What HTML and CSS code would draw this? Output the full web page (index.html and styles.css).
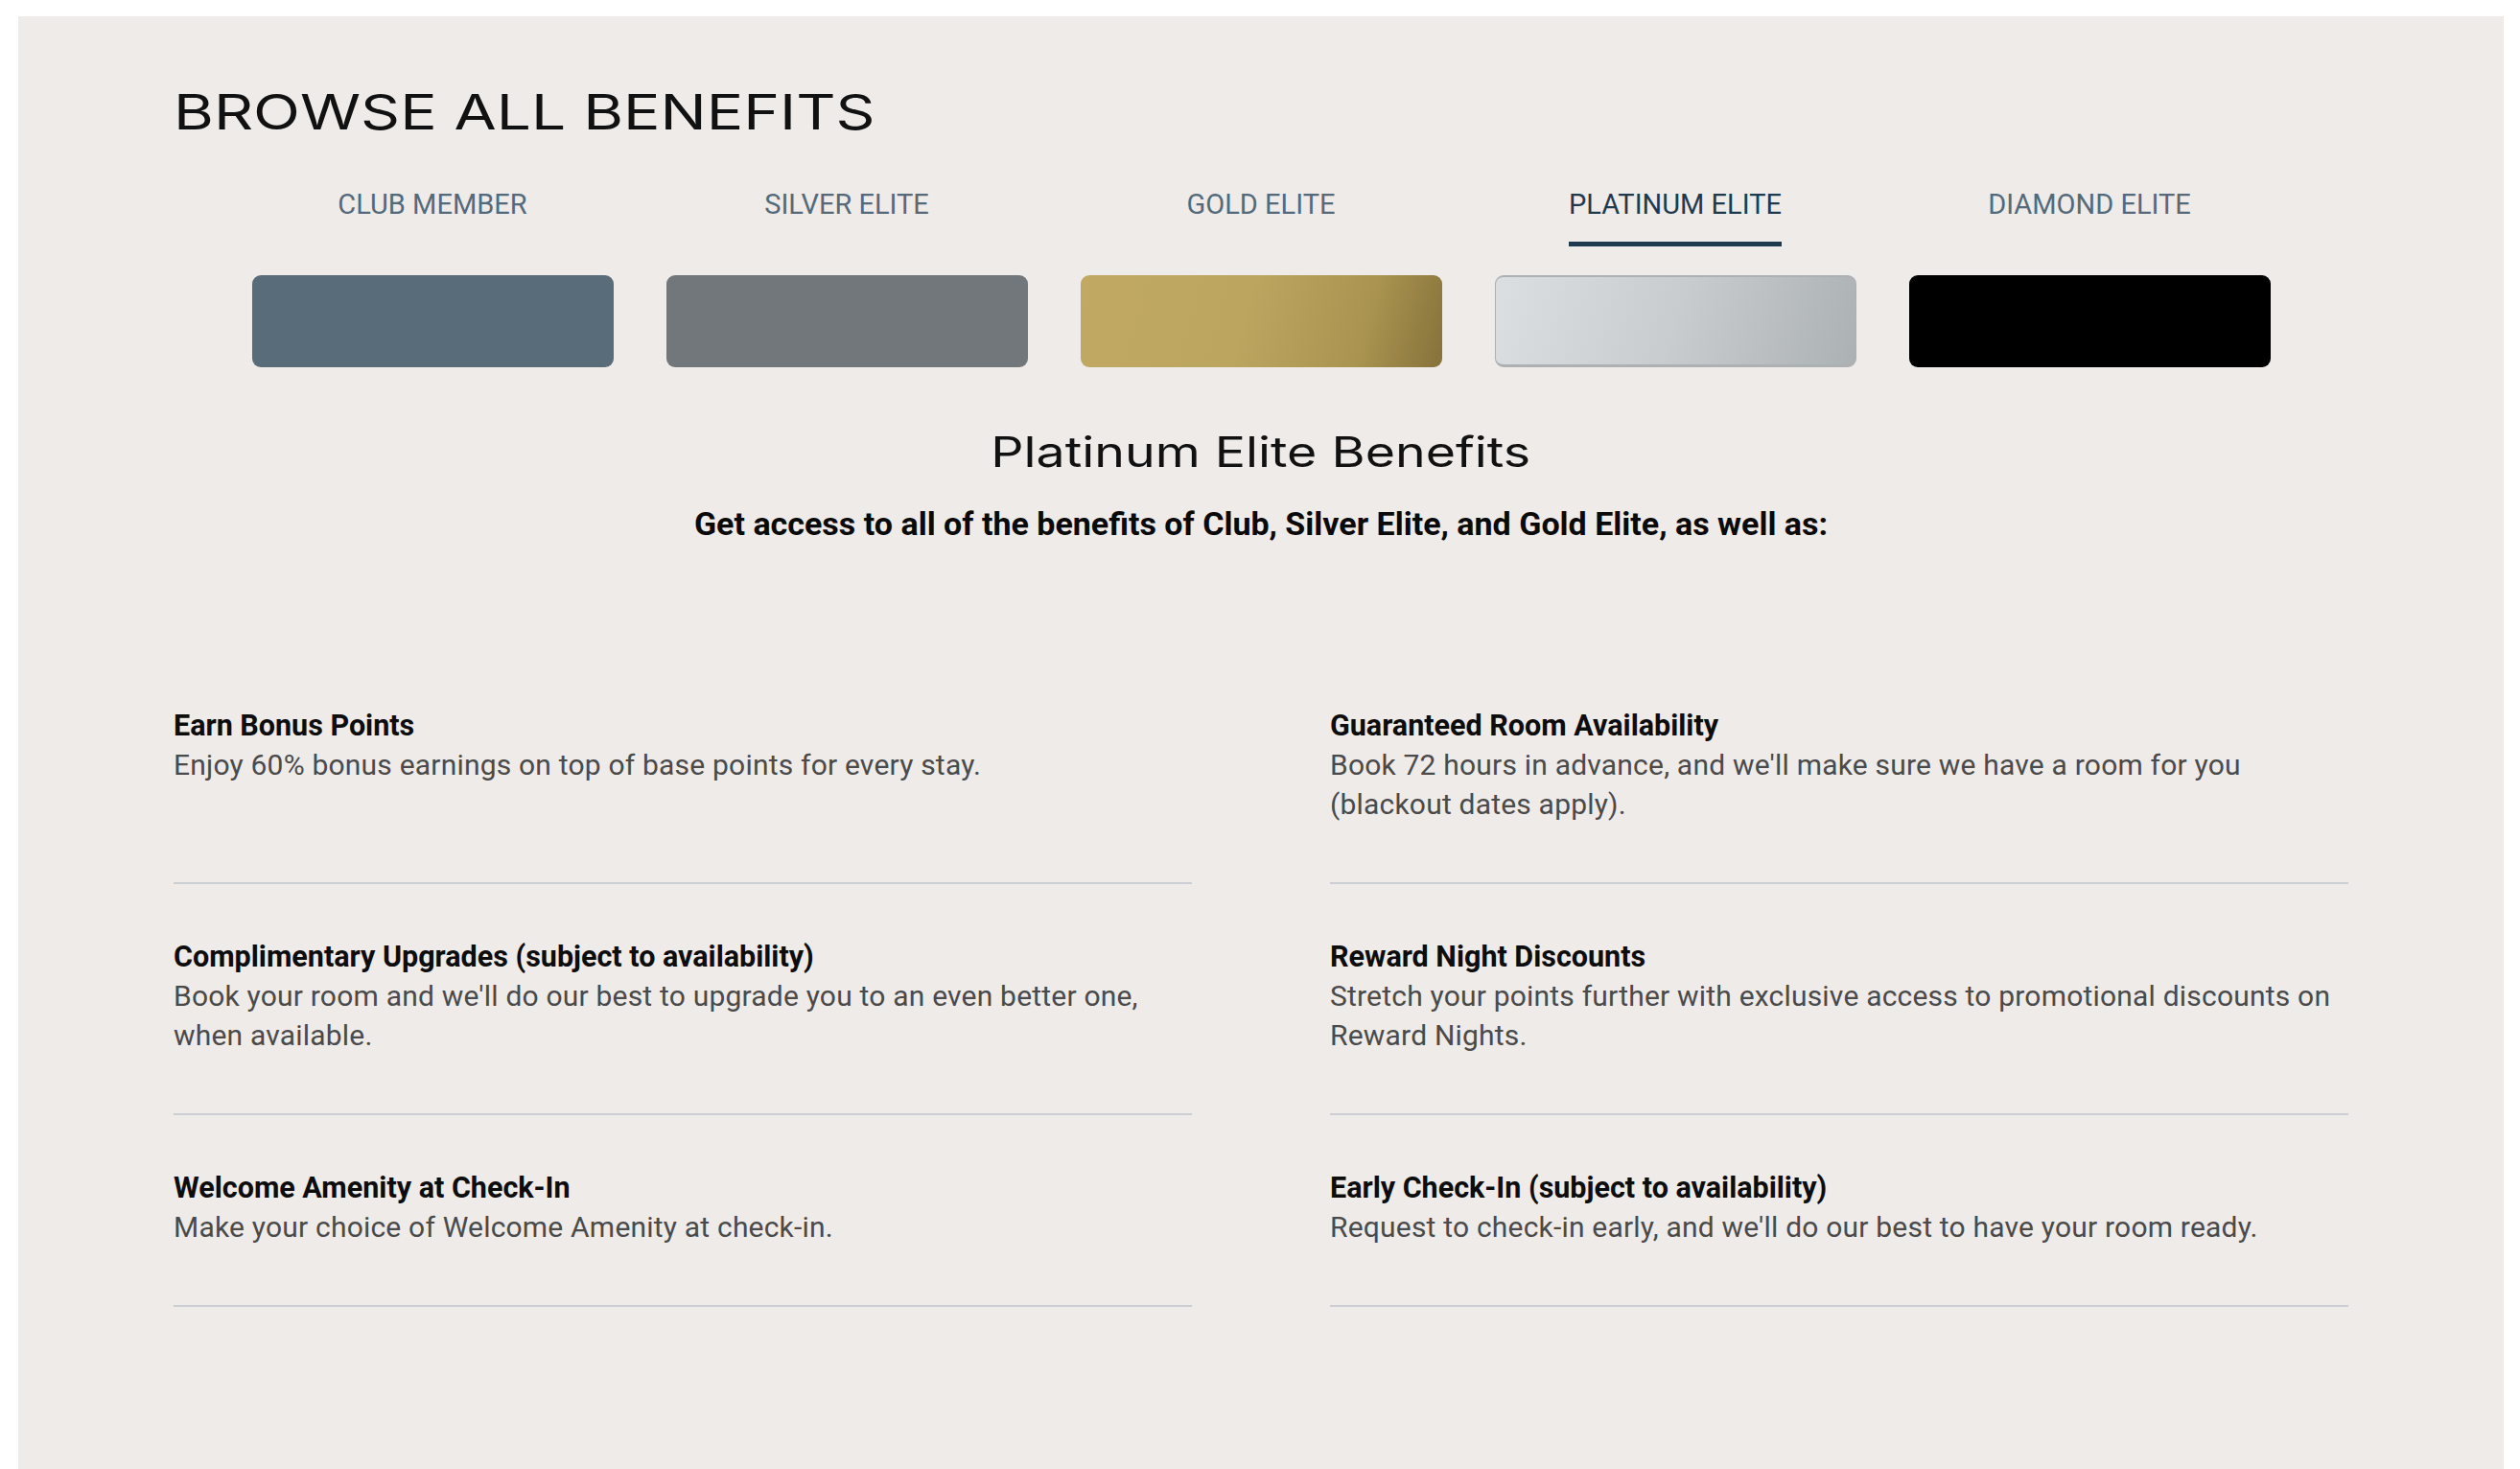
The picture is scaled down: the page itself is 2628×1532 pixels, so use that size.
FILE: index.html
```html
<!DOCTYPE html>
<html lang="en">
  <head>
    <meta charset="UTF-8" />
    <meta name="viewport" content="width=device-width, initial-scale=1.0" />
    <title>Browse all benefits</title>
    <link rel="stylesheet" href="styles.css">
  </head>
  <body>
    <main class="panel">
      <h1 class="titulo"><span class="ancho">BROWSE ALL BENEFITS</span></h1>

      <nav class="niveles">
        <div class="nivel">
          <span class="pestana">CLUB MEMBER</span>
          <div class="tarjeta club"></div>
        </div>
        <div class="nivel">
          <span class="pestana">SILVER ELITE</span>
          <div class="tarjeta silver"></div>
        </div>
        <div class="nivel">
          <span class="pestana">GOLD ELITE</span>
          <div class="tarjeta gold"></div>
        </div>
        <div class="nivel">
          <span class="pestana activa">PLATINUM ELITE</span>
          <div class="tarjeta platinum"></div>
        </div>
        <div class="nivel">
          <span class="pestana">DIAMOND ELITE</span>
          <div class="tarjeta diamond"></div>
        </div>
      </nav>

      <h2 class="subtitulo"><span class="ancho">Platinum Elite Benefits</span></h2>
      <p class="intro">Get access to all of the benefits of Club, Silver Elite, and Gold Elite, as well as:</p>

      <section class="beneficios">
        <div class="beneficio">
          <h3>Earn Bonus Points</h3>
          <p>Enjoy 60% bonus earnings on top of base points for every stay.</p>
        </div>
        <div class="beneficio">
          <h3>Guaranteed Room Availability</h3>
          <p>Book 72 hours in advance, and we'll make sure we have a room for you (blackout dates apply).</p>
        </div>
        <div class="beneficio">
          <h3>Complimentary Upgrades (subject to availability)</h3>
          <p>Book your room and we'll do our best to upgrade you to an even better one, when available.</p>
        </div>
        <div class="beneficio">
          <h3>Reward Night Discounts</h3>
          <p>Stretch your points further with exclusive access to promotional discounts on Reward Nights.</p>
        </div>
        <div class="beneficio">
          <h3>Welcome Amenity at Check-In</h3>
          <p>Make your choice of Welcome Amenity at check-in.</p>
        </div>
        <div class="beneficio">
          <h3>Early Check-In (subject to availability)</h3>
          <p>Request to check-in early, and we'll do our best to have your room ready.</p>
        </div>
      </section>
    </main>
  </body>
</html>
```

FILE: styles.css
```css
body {
  margin: 0;
  background-color: #ffffff;
  font-family: Roboto, "Liberation Sans", sans-serif;
}

.panel {
  margin: 17px 17px 0 19px;
  min-height: 1515px;
  padding: 70px 162px 0;
  box-sizing: border-box;
  background-color: #eeebe9;
}

/* titulos anchos, imitan una fuente extendida */
.ancho {
  display: inline-block;
  transform: scaleX(1.28);
  transform-origin: left center;
}

.titulo {
  margin: 0;
  font-family: Inter, "DejaVu Sans", sans-serif;
  font-weight: 400;
  font-size: 50px;
  line-height: 60px;
  color: #111111;
}

.niveles {
  display: grid;
  grid-template-columns: repeat(5, 377px);
  column-gap: 55px;
  justify-content: center;
  margin-top: 48px;
}

.nivel {
  display: flex;
  flex-direction: column;
  align-items: center;
}

.pestana {
  font-size: 29px;
  line-height: 36px;
  color: #546a7a;
  padding-bottom: 21px;
  border-bottom: 5px solid transparent;
}

.pestana.activa {
  color: #1e3a4e;
  border-bottom-color: #1e3a4e;
}

.tarjeta {
  width: 377px;
  height: 96px;
  margin-top: 30px;
  border-radius: 9px;
  box-sizing: border-box;
}

.club {
  background-color: #586d79;
}
.silver {
  background-color: #72777b;
}
.gold {
  background: linear-gradient(105deg, #c1a963 0%, #bca55f 45%, #a99350 78%, #86723a 100%);
}
.platinum {
  background: linear-gradient(105deg, #dcdfe1 0%, #c8ccce 50%, #acb1b4 100%);
  border: 1px solid #aeb1b4;
  border-top-width: 2px;
  border-bottom-width: 3px;
}
.diamond {
  background-color: #000000;
}

.subtitulo {
  margin: 62px 0 0;
  text-align: center;
  font-family: Inter, "DejaVu Sans", sans-serif;
  font-weight: 400;
  font-size: 44px;
  line-height: 52px;
  color: #111111;
}

.subtitulo .ancho {
  transform: scaleX(1.22);
  transform-origin: center center;
}

.intro {
  margin: 29px 0 0;
  text-align: center;
  font-weight: 700;
  font-size: 34px;
  line-height: 40px;
  color: #0a0a0a;
}

.beneficios {
  display: grid;
  grid-template-columns: 1fr 1fr;
  column-gap: 144px;
  margin-top: 115px;
}

.beneficio {
  padding: 56px 0 61px;
  border-bottom: 2px solid #cbced2;
}

.beneficio h3 {
  margin: 0;
  font-size: 30.5px;
  line-height: 40px;
  font-weight: 700;
  color: #0d0d0d;
}

.beneficio p {
  margin: 0;
  font-size: 30px;
  line-height: 41px;
  letter-spacing: 0.2px;
  color: #4a4a4a;
}
```
